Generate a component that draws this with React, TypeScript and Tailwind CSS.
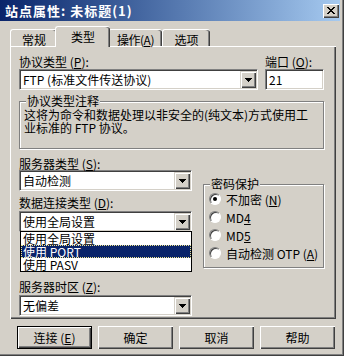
import type React from "react"

const raised =
  "shadow-[inset_1px_1px_0_#fff,inset_-1px_-1px_0_#404040,inset_-2px_-2px_0_#808080]"
const sunken =
  "border border-t-[#808080] border-l-[#808080] border-r-white border-b-white shadow-[inset_1px_1px_0_#404040,inset_-1px_-1px_0_#d4d0c8]"

function Arrow() {
  return (
    <svg width="7" height="4" viewBox="0 0 7 4" className="block">
      <path d="M0 0h7v1H0zM1 1h5v1H1zM2 2h3v1H2zM3 3h1v1H3z" fill="#000" />
    </svg>
  )
}

function Combo({ value, className = "" }: { value: string; className?: string }) {
  return (
    <div className={`flex h-[21px] items-center bg-white pl-[3px] pr-[1px] ${sunken} ${className}`}>
      <span className="flex-1 whitespace-nowrap text-[12px] leading-[13px] text-black">{value}</span>
      <div className="flex h-[17px] w-[16px] items-center justify-center bg-[#d4d0c8] shadow-[inset_1px_1px_0_#d4d0c8,inset_2px_2px_0_#fff,inset_-1px_-1px_0_#404040,inset_-2px_-2px_0_#808080]">
        <Arrow />
      </div>
    </div>
  )
}

function Label({ text, hot, className = "" }: { text: string; hot: string; className?: string }) {
  return (
    <div className={`h-[13px] whitespace-nowrap text-[12px] leading-[13px] ${className}`}>
      {text} (<u>{hot}</u>):
    </div>
  )
}

function Group({
  title,
  className = "",
  children,
}: {
  title: string
  className?: string
  children: React.ReactNode
}) {
  return (
    <div className={`relative border border-[#808080] shadow-[inset_1px_1px_0_#fff,1px_1px_0_#fff] ${className}`}>
      <span className="absolute -top-[7px] left-[6px] bg-[#d4d0c8] px-[1px] text-[12px] leading-[12px]">
        {title}
      </span>
      {children}
    </div>
  )
}

function Radio({ checked, children }: { checked?: boolean; children: React.ReactNode }) {
  return (
    <div className="flex h-[18px] items-center gap-[5px]">
      <div className="flex h-[12px] w-[12px] items-center justify-center rounded-full border border-t-[#808080] border-l-[#808080] border-r-white border-b-white bg-white shadow-[inset_1px_1px_0_#404040]">
        {checked && <div className="h-[4px] w-[4px] rounded-full bg-black" />}
      </div>
      <span className="whitespace-nowrap text-[12px] leading-[13px]">{children}</span>
    </div>
  )
}

function Button({ children, def }: { children: React.ReactNode; def?: boolean }) {
  return (
    <div className={`h-[23px] w-[75px] ${def ? "border border-black" : ""}`}>
      <div className={`flex h-full w-full items-center justify-center bg-[#d4d0c8] text-[12px] ${raised}`}>
        {children}
      </div>
    </div>
  )
}

function Tab({ label, active, w }: { label: React.ReactNode; active?: boolean; w: string }) {
  const base =
    "whitespace-nowrap rounded-t-[3px] border-t border-l border-white bg-[#d4d0c8] pt-[3px] text-center text-[12px] leading-[13px] shadow-[inset_-1px_0_0_#404040,inset_-2px_0_0_#808080]"
  if (active) {
    return <div className={`relative z-10 -mx-[2px] -mb-px h-[21px] ${w} ${base}`}>{label}</div>
  }
  return <div className={`h-[17px] ${w} ${base}`}>{label}</div>
}

export default function App() {
  return (
    <div className="h-[356px] w-[344px] overflow-hidden bg-[#d4d0c8] font-['Noto_Sans_CJK_SC',sans-serif] text-black shadow-[inset_-1px_-1px_0_#404040,inset_-2px_-2px_0_#808080]">
      {/* title bar */}
      <div className="flex h-[21px] w-[340px] items-center bg-linear-to-r from-[#0a246a] to-[#a6caf0] pl-[5px] pr-[1px]">
        <span className="flex-1 whitespace-nowrap text-[13px] font-bold tracking-[1px] text-white">
          站点属性: 未标题(1)
        </span>
        <div className={`flex h-[14px] w-[16px] items-center justify-center bg-[#d4d0c8] ${raised}`}>
          <svg width="8" height="7" viewBox="0 0 8 7" className="block">
            <path
              d="M0 0h2v1H0zM6 0h2v1H6zM1 1h2v1H1zM5 1h2v1H5zM2 2h4v1H2zM3 3h2v1H3zM2 4h4v1H2zM1 5h2v1H1zM5 5h2v1H5zM0 6h2v1H0zM6 6h2v1H6z"
              fill="#000"
            />
          </svg>
        </div>
      </div>

      {/* tabs */}
      <div className="ml-[10px] mt-[5px] flex h-[20px] items-end">
        <Tab label="常规" w="w-[47px]" />
        <Tab label="类型" w="w-[55px]" active />
        <Tab
          label={
            <span className="tracking-[-0.5px]">
              操作(<u>A</u>)
            </span>
          }
          w="w-[54px]"
        />
        <Tab label="选项" w="w-[48px]" />
      </div>

      {/* panel */}
      <div className="ml-[10px] h-[273px] w-[326px] border-t border-l border-white px-[8px] pt-[8px] shadow-[inset_-1px_-1px_0_#404040,inset_-2px_-2px_0_#808080]">
        <div className="flex gap-[7px]">
          <div className="w-[239px]">
            <Label text="协议类型" hot="P" />
            <Combo value="FTP (标准文件传送协议)" className="mt-[1px]" />
          </div>
          <div className="w-[59px]">
            <Label text="端口" hot="O" />
            <div className={`mt-[1px] h-[21px] bg-white pl-[3px] text-[12px] leading-[19px] ${sunken}`}>21</div>
          </div>
        </div>

        <Group title="协议类型注释" className="mt-[11px] h-[48px] w-[305px]">
          <div className="pl-[4px] pt-[6px] text-[12px] leading-[13px]">
            <div className="whitespace-nowrap">这将为命令和数据处理以非安全的(纯文本)方式使用工</div>
            <div className="whitespace-nowrap">业标准的 FTP 协议。</div>
          </div>
        </Group>

        <div className="mt-[8px] flex gap-[11px]">
          <div className="w-[173px]">
            <Label text="服务器类型" hot="S" />
            <Combo value="自动检测" className="h-[20px]" />
            <Label text="数据连接类型" hot="D" className="mt-[5px]" />
            <div className="relative mt-[2px]">
              <Combo value="使用全局设置" className="h-[20px]" />
              <div className="absolute left-[1px] top-[20px] z-20 w-[172px] border border-black bg-white text-[12px] leading-[13px]">
                <div className="h-[13px] pl-[2px]">使用全局设置</div>
                <div className="h-[13px] border border-dotted border-[#f0e68c] bg-[#0a246a] pl-[1px] leading-[11px] text-white">
                  使用 PORT
                </div>
                <div className="h-[13px] pl-[2px]">使用 PASV</div>
              </div>
            </div>
            <Label text="服务器时区" hot="Z" className="mt-[48px]" />
            <Combo value="无偏差" className="mt-[2px] h-[20px]" />
          </div>

          <Group title="密码保护" className="mt-[27px] h-[84px] w-[121px]">
            <div className="pl-[5px] pt-[5px]">
              <Radio checked>
                不加密 (<u>N</u>)
              </Radio>
              <Radio>
                MD<u>4</u>
              </Radio>
              <Radio>
                MD<u>5</u>
              </Radio>
              <Radio>
                自动检测 OTP (<u>A</u>)
              </Radio>
            </div>
          </Group>
        </div>
      </div>

      {/* buttons */}
      <div className="ml-[17px] mt-[7px] flex gap-[6px]">
        <Button def>
          连接 (<u>E</u>)
        </Button>
        <Button>确定</Button>
        <Button>取消</Button>
        <Button>帮助</Button>
      </div>
    </div>
  )
}
